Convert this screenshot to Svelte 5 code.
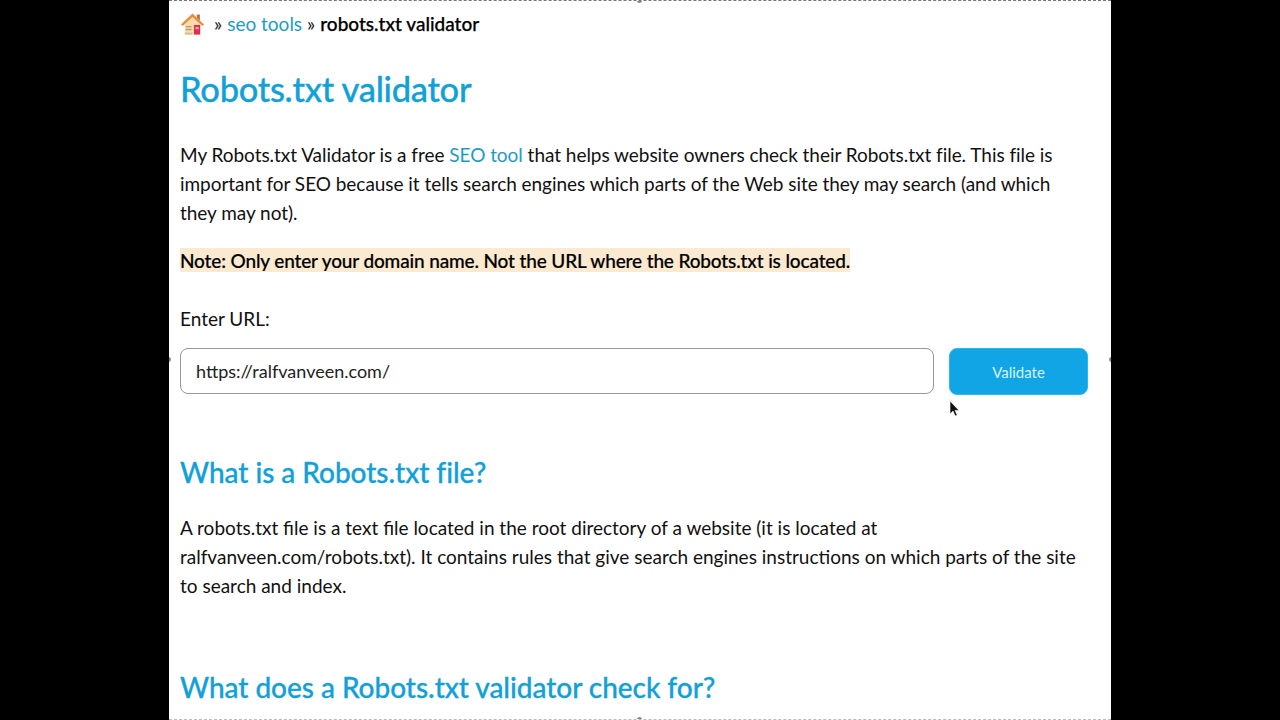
<script lang="ts">
  let url = $state("https://ralfvanveen.com/");
</script>

<div class="stage">
  <main class="page">
    <span class="dot top" aria-hidden="true"></span>
    <span class="dot bottom" aria-hidden="true"></span>
    <span class="dot left" aria-hidden="true"></span>
    <span class="dot right" aria-hidden="true"></span>

    <nav class="crumbs">
      <svg class="home" viewBox="0 0 26 24" aria-label="home">
        <path d="M5 11 13 4l8 7v12H5z" fill="#f8dcae" />
        <path d="M17.500 2h3.200v6.500l-3.200-2.800z" fill="#b5764a" />
        <path d="M1 12.500 13 1l12 11.500-1.800 1.600L13 4.600 2.800 14.100z" fill="#ee8a3c" />
        <path d="M14.500 13h6.500v10h-6.500z" fill="#d9304f" />
        <path d="M16 15h3.500v2.500H16z" fill="#f4a0b0" />
        <path d="M6 14h6v1.500H6zM6 17h6v1.500H6z" fill="#b79a6c" />
        <path d="M5 21h8v2H5z" fill="#d6bd8e" />
      </svg>
      <span class="sep">»</span>
      <a href="#tools">seo tools</a>
      <span>»</span>
      <b>robots.txt validator</b>
    </nav>

    <h1>Robots.txt validator</h1>

    <p class="intro">
      My Robots.txt Validator is a free <a href="#tool">SEO tool</a> that helps website owners check their Robots.txt file. This file is important for SEO because it tells search engines which parts of the Web site they may search (and which they may not).
    </p>

    <p class="note"><mark>Note: Only enter your domain name. Not the URL where the Robots.txt is located.</mark></p>

    <label for="url">Enter URL:</label>
    <form class="check" onsubmit={(e) => e.preventDefault()}>
      <input id="url" bind:value={url} />
      <button type="submit">Validate</button>
      <svg class="cursor" viewBox="0 0 12 18" aria-hidden="true">
        <path d="M1 1v13l3-3 2.200 5 2-1-2.200-4.600H10z" fill="#111" stroke="#fff" stroke-width="0.6" />
      </svg>
    </form>

    <h2 class="first">What is a Robots.txt file?</h2>
    <p class="body">
      A robots.txt file is a text file located in the root directory of a website (it is located at ralfvanveen.com/robots.txt). It contains rules that give search engines instructions on which parts of the site to search and index.
    </p>

    <h2 class="second">What does a Robots.txt validator check for?</h2>
  </main>
</div>

<style>
  :global(body) {
    margin: 0;
    background: #000;
  }
  .stage {
    height: 720px;
    overflow: hidden;
    display: flex;
    justify-content: center;
    background: #000;
    font-family: "Lato", "Open Sans", sans-serif;
    color: #111;
  }
  .page {
    position: relative;
    width: 942px;
    height: 720px;
    box-sizing: border-box;
    padding: 0 23px 0 11px;
    background: #fff;
    border-top: 1px dashed #777;
    border-bottom: 1px dashed #bbb;
    overflow: hidden;
  }
  .dot {
    position: absolute;
    width: 5px;
    height: 5px;
    border-radius: 50%;
    background: #888;
  }
  .dot.top { top: -3px; left: 468px; }
  .dot.bottom { bottom: -3px; left: 468px; }
  .dot.left { top: 356px; left: -3px; }
  .dot.right { top: 356px; right: -3px; }
  .crumbs {
    display: flex;
    align-items: center;
    gap: 5px;
    height: 45px;
    font-size: 19px;
  }
  .home {
    width: 25px;
    height: 24px;
    margin-right: 4px;
  }
  a {
    color: #1c9cc4;
    text-decoration: none;
  }
  b {
    font-weight: 500;
    color: #000;
    -webkit-text-stroke: 0.25px #000;
  }
  h1 {
    margin: 21px 0 0;
    font-size: 34.5px;
    line-height: 44px;
    letter-spacing: -0.3px;
    font-weight: 500;
    color: #11a0d8;
    -webkit-text-stroke: 0.3px #11a0d8;
  }
  h2 {
    margin: 0;
    font-size: 28px;
    line-height: 36px;
    letter-spacing: -0.04px;
    font-weight: 500;
    color: #11a0d8;
    -webkit-text-stroke: 0.3px #11a0d8;
  }
  h2.first { margin-top: 59px; }
  h2.second { margin-top: 69px; }
  p {
    margin: 0;
    font-size: 19px;
    line-height: 29px;
    letter-spacing: -0.04px;
  }
  .intro { margin-top: 29px; }
  .body { margin-top: 23px; letter-spacing: 0; }
  .note {
    margin-top: 19px;
    font-weight: 500;
    color: #000;
    letter-spacing: -0.14px;
    -webkit-text-stroke: 0.2px #000;
  }
  mark {
    background: #fbeacf;
    color: inherit;
    padding: 1px 0 0;
  }
  label {
    display: block;
    margin-top: 29px;
    font-size: 19px;
    line-height: 29px;
  }
  .check {
    position: relative;
    display: flex;
    gap: 15px;
    margin-top: 15px;
  }
  input {
    flex: 1;
    min-width: 0;
    height: 46px;
    box-sizing: border-box;
    padding: 0 15px;
    border: 1.5px solid #999;
    border-radius: 8px;
    font: inherit;
    font-size: 18px;
    color: #222;
    outline: none;
  }
  button {
    width: 139px;
    height: 47px;
    border: 1px solid #28b8ee;
    border-radius: 8px;
    background: #11a5e6;
    color: #d6f3ff;
    font: inherit;
    font-size: 15px;
    cursor: pointer;
  }
  .cursor {
    position: absolute;
    left: 769px;
    top: 52px;
    width: 12px;
    height: 18px;
  }
</style>
